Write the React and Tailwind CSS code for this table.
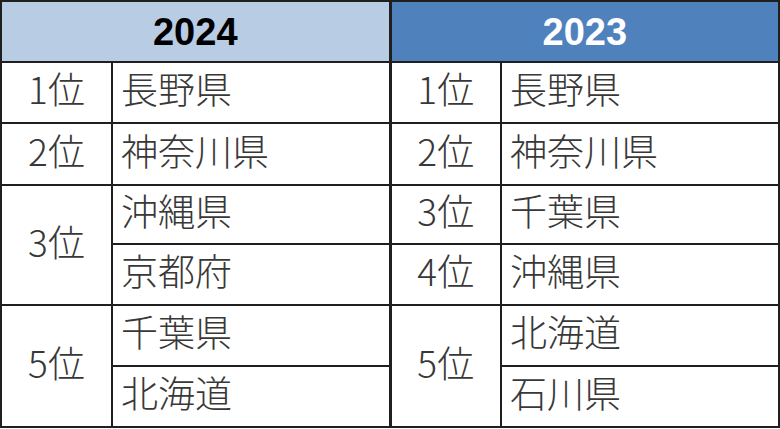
import React from 'react';

const jp = { fontFamily: '"Noto Sans CJK JP", "Noto Sans", sans-serif' };

function Rank({ children, rowSpan, className = '' }) {
  return (
    <td
      rowSpan={rowSpan}
      className={`border-2 border-[#1f1f1f] pb-2 text-center align-middle text-[37px] font-light text-[#383838] ${className}`}
    >
      {children}
    </td>
  );
}

function Pref({ children, className = '' }) {
  return (
    <td
      className={`border-2 border-[#1f1f1f] pb-2 pl-[8px] align-middle text-[37px] font-light text-[#383838] ${className}`}
    >
      {children}
    </td>
  );
}

export default function App() {
  return (
    <div className="w-[780px] h-[429px] bg-white overflow-hidden" style={jp}>
      <table className="w-[778px] table-fixed border-collapse leading-none">
        <colgroup>
          <col className="w-[111px]" />
          <col className="w-[278px]" />
          <col className="w-[111px]" />
          <col className="w-[278px]" />
        </colgroup>
        <thead>
          <tr className="h-[61px]">
            <th
              colSpan={2}
              className="border-2 border-[#1f1f1f] bg-[#b8cce4] text-center text-[38px] font-bold text-black"
              style={{ fontFamily: '"Liberation Sans", Arial, sans-serif' }}
            >
              2024
            </th>
            <th
              colSpan={2}
              className="border-2 border-l-[3px] border-[#1f1f1f] bg-[#4f81bd] text-center text-[38px] font-bold text-white"
              style={{ fontFamily: '"Liberation Sans", Arial, sans-serif' }}
            >
              2023
            </th>
          </tr>
        </thead>
        <tbody>
          <tr className="h-[61px]">
            <Rank>1位</Rank>
            <Pref>長野県</Pref>
            <Rank className="border-l-[3px]">1位</Rank>
            <Pref>長野県</Pref>
          </tr>
          <tr className="h-[62px]">
            <Rank>2位</Rank>
            <Pref>神奈川県</Pref>
            <Rank className="border-l-[3px]">2位</Rank>
            <Pref>神奈川県</Pref>
          </tr>
          <tr className="h-[59px]">
            <Rank rowSpan={2}>3位</Rank>
            <Pref>沖縄県</Pref>
            <Rank className="border-l-[3px]">3位</Rank>
            <Pref>千葉県</Pref>
          </tr>
          <tr className="h-[61px]">
            <Pref>京都府</Pref>
            <Rank className="border-l-[3px]">4位</Rank>
            <Pref>沖縄県</Pref>
          </tr>
          <tr className="h-[61px]">
            <Rank rowSpan={2}>5位</Rank>
            <Pref>千葉県</Pref>
            <Rank rowSpan={2} className="border-l-[3px]">5位</Rank>
            <Pref>北海道</Pref>
          </tr>
          <tr className="h-[61px]">
            <Pref>北海道</Pref>
            <Pref>石川県</Pref>
          </tr>
        </tbody>
      </table>
    </div>
  );
}
